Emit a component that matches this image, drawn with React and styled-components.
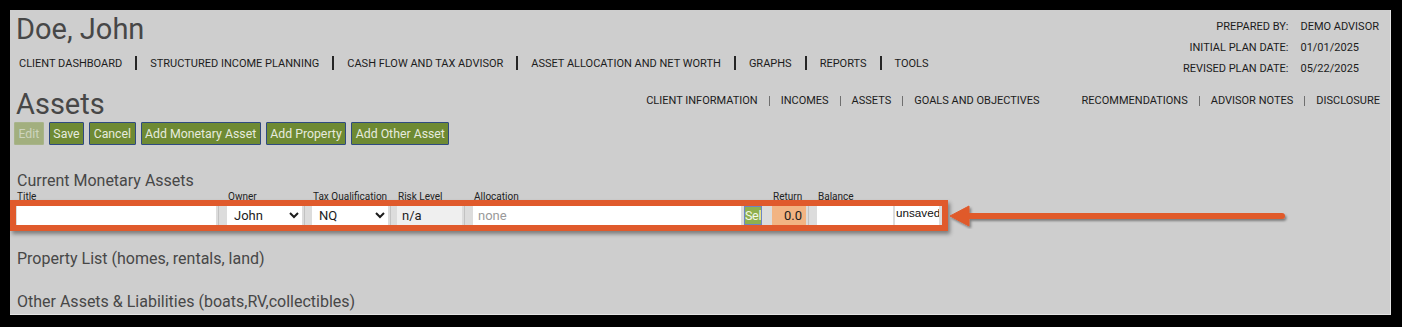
import React from 'react';
import styled, { createGlobalStyle } from 'styled-components';

const GlobalStyle = createGlobalStyle`
  html, body {
    margin: 0;
    padding: 0;
    background: #000;
  }
  body {
    font-family: Roboto, "Liberation Sans", Arial, sans-serif;
  }
`;

const Panel = styled.div`
  position: relative;
  margin: 10px;
  width: 1381px;
  height: 305px;
  padding: 3px 10px 0 6px;
  box-sizing: border-box;
  background: #cecece;
  border-right: 1px solid #e4e4e4;
  border-bottom: 1px solid #e4e4e4;
  overflow: hidden;
  color: #1c1c1c;
`;

const HeaderRow = styled.div`
  display: flex;
  justify-content: space-between;
  align-items: flex-start;
`;

const ClientName = styled.h1`
  margin: 0;
  padding-top: 1px;
  font-size: 29px;
  line-height: 30px;
  font-weight: 400;
  color: #474747;
`;

const MainNav = styled.nav`
  display: flex;
  align-items: center;
  gap: 13px;
  margin: 11px 0 0 3px;
  height: 16px;
  font-size: 11px;
  text-transform: uppercase;
`;

const NavBar = styled.span`
  width: 2px;
  height: 14px;
  background: #262626;
`;

const InfoGrid = styled.dl`
  display: grid;
  grid-template-columns: auto auto;
  column-gap: 12px;
  margin: 3px 1px 0 0;
  font-size: 11px;
  line-height: 21px;

  dt {
    text-align: right;
  }
  dd {
    margin: 0;
  }
`;

const PageRow = styled.div`
  display: flex;
  justify-content: space-between;
  align-items: flex-start;
  margin-top: 9px;
`;

const PageTitle = styled.h2`
  margin: 0;
  font-size: 29px;
  line-height: 32px;
  font-weight: 400;
  color: #474747;
`;

const SubNav = styled.nav`
  display: flex;
  align-items: center;
  gap: 42px;
  margin-top: 5px;
  font-size: 11px;
  line-height: 16px;
  text-transform: uppercase;
`;

const SubGroup = styled.div`
  display: flex;
  align-items: center;
  gap: 11px;
`;

const SubBar = styled.span`
  width: 1px;
  height: 10px;
  background: #6f6f6f;
`;

const Toolbar = styled.div`
  display: flex;
  gap: 5px;
  margin: 2px 0 0 -2px;
`;

const Button = styled.button`
  height: 23px;
  padding: 0 3.5px;
  border: 1px solid ${p => (p.disabled ? '#a8b48a' : '#2f4a80')};
  background: ${p => (p.disabled ? '#a2af7e' : '#6e8a33')};
  color: ${p => (p.disabled ? '#cdd4bd' : '#e6eadf')};
  font-family: Roboto, "Liberation Sans", sans-serif;
  font-size: 12.3px;
  border-radius: 1px;
`;

const SectionTitle = styled.h3`
  margin: ${p => p.$top}px 0 0 1px;
  font-size: 16px;
  line-height: 18px;
  font-weight: 400;
  color: #474747;
`;

const columns = '211px 85px 85px 76px 271px 28px 45px 78px 47px';

const LabelRow = styled.div`
  display: grid;
  grid-template-columns: ${columns};
  height: 9px;
  margin-top: 1px;
  overflow: hidden;
  font-size: 10px;
  line-height: 12px;
  color: #222;

  span {
    padding-left: 1px;
  }
`;

const AnnotatedRow = styled.div`
  display: inline-grid;
  grid-template-columns: ${columns};
  margin-left: -6px;
  height: 19px;
  border: 6px solid #e05a2c;
  background: #dcdcdc;
  box-shadow: 2px 3px 4px rgba(0, 0, 0, 0.4);
`;

const Cell = styled.div`
  display: flex;
  align-items: stretch;
  padding-left: ${p => p.$pad || 0}px;

  &::after {
    content: '';
    width: 1px;
    margin-left: 2px;
    background: ${p => (p.$line ? '#c2c2c2' : 'transparent')};
  }
`;

const Field = styled.input`
  box-sizing: border-box;
  width: ${p => p.$w}px;
  height: 19px;
  padding: 0 ${p => (p.$right ? 4 : 5)}px;
  border: none;
  outline: none;
  background: ${p => p.$bg || '#fff'};
  font-family: Roboto, "Liberation Sans", sans-serif;
  font-size: 13px;
  color: #1c1c1c;
  text-align: ${p => (p.$right ? 'right' : 'left')};

  &::placeholder {
    color: #9a9a9a;
  }
`;

const Select = styled.select`
  box-sizing: border-box;
  width: ${p => p.$w}px;
  height: 19px;
  padding: 0 0 0 3px;
  border: none;
  background: #fff;
  font-family: Roboto, "Liberation Sans", sans-serif;
  font-size: 13px;
  color: #1c1c1c;
`;

const SelButton = styled.button`
  box-sizing: border-box;
  width: 18px;
  height: 19px;
  padding: 0;
  border: 1px solid #6d86c4;
  background: #8fb04e;
  color: #f4f8ea;
  font-family: Roboto, "Liberation Sans", sans-serif;
  font-size: 12.5px;
  letter-spacing: -0.3px;
  text-align: left;
  overflow: hidden;
  white-space: nowrap;
`;

const Status = styled.div`
  box-sizing: border-box;
  width: 46px;
  height: 19px;
  padding-left: 1px;
  background: #fff;
  font-family: "Liberation Sans", Arial, sans-serif;
  font-size: 11.7px;
  line-height: 14px;
  color: #111;
  overflow: hidden;
  white-space: nowrap;
`;

const Arrow = styled.svg`
  position: absolute;
  left: 935px;
  top: 193px;
`;

const mainNav = [
  'Client Dashboard',
  'Structured Income Planning',
  'Cash Flow and Tax Advisor',
  'Asset Allocation and Net Worth',
  'Graphs',
  'Reports',
  'Tools',
];

const subLeft = ['Client Information', 'Incomes', 'Assets', 'Goals and Objectives'];
const subRight = ['Recommendations', 'Advisor Notes', 'Disclosure'];

function withBars(items, Bar) {
  return items.flatMap((item, i) =>
    i === 0 ? [<span key={item}>{item}</span>] : [<Bar key={item + '-bar'} />, <span key={item}>{item}</span>]
  );
}

export default function App() {
  return (
    <>
      <GlobalStyle />
      <Panel>
        <HeaderRow>
          <div>
            <ClientName>Doe, John</ClientName>
            <MainNav>{withBars(mainNav, NavBar)}</MainNav>
          </div>
          <InfoGrid>
            <dt>PREPARED BY:</dt>
            <dd>DEMO ADVISOR</dd>
            <dt>INITIAL PLAN DATE:</dt>
            <dd>01/01/2025</dd>
            <dt>REVISED PLAN DATE:</dt>
            <dd>05/22/2025</dd>
          </InfoGrid>
        </HeaderRow>

        <PageRow>
          <PageTitle>Assets</PageTitle>
          <SubNav>
            <SubGroup>{withBars(subLeft, SubBar)}</SubGroup>
            <SubGroup>{withBars(subRight, SubBar)}</SubGroup>
          </SubNav>
        </PageRow>

        <Toolbar>
          <Button disabled>Edit</Button>
          <Button>Save</Button>
          <Button>Cancel</Button>
          <Button>Add Monetary Asset</Button>
          <Button>Add Property</Button>
          <Button>Add Other Asset</Button>
        </Toolbar>

        <SectionTitle $top={27}>Current Monetary Assets</SectionTitle>
        <LabelRow>
          <span>Title</span>
          <span>Owner</span>
          <span>Tax Qualification</span>
          <span>Risk Level</span>
          <span>Allocation</span>
          <span />
          <span>Return</span>
          <span>Balance</span>
          <span />
        </LabelRow>
        <AnnotatedRow>
          <Cell $pad={1} $line>
            <Field $w={199} />
          </Cell>
          <Cell $line>
            <Select $w={75} defaultValue="John">
              <option>John</option>
              <option>Jane</option>
              <option>Joint</option>
            </Select>
          </Cell>
          <Cell $line>
            <Select $w={76} defaultValue="NQ">
              <option>NQ</option>
              <option>IRA</option>
              <option>Roth</option>
            </Select>
          </Cell>
          <Cell $line>
            <Field $w={65} $bg="#efefef" defaultValue="n/a" readOnly />
          </Cell>
          <Cell>
            <Field $w={268} placeholder="none" />
          </Cell>
          <Cell>
            <SelButton>Sel</SelButton>
          </Cell>
          <Cell $line>
            <Field $w={34} $bg="#f2b483" $right defaultValue="0.0" />
          </Cell>
          <Cell>
            <Field $w={76} />
          </Cell>
          <Cell>
            <Status>unsaved</Status>
          </Cell>
        </AnnotatedRow>

        <SectionTitle $top={19}>Property List (homes, rentals, land)</SectionTitle>
        <SectionTitle $top={25}>Other Assets &amp; Liabilities (boats,RV,collectibles)</SectionTitle>

        <Arrow width="345" height="26" viewBox="0 0 345 26">
          <defs>
            <filter id="arrowShadow" x="-5%" y="-50%" width="110%" height="200%">
              <feDropShadow dx="1.5" dy="2" stdDeviation="1.2" floodColor="#000" floodOpacity="0.4" />
            </filter>
          </defs>
          <g filter="url(#arrowShadow)" fill="#e05a2c" stroke="#e05a2c">
            <line x1="22" y1="13" x2="337" y2="13" strokeWidth="6" strokeLinecap="round" />
            <polygon points="5,13 24,3 24,23" strokeWidth="1" strokeLinejoin="round" />
          </g>
        </Arrow>
      </Panel>
    </>
  );
}
